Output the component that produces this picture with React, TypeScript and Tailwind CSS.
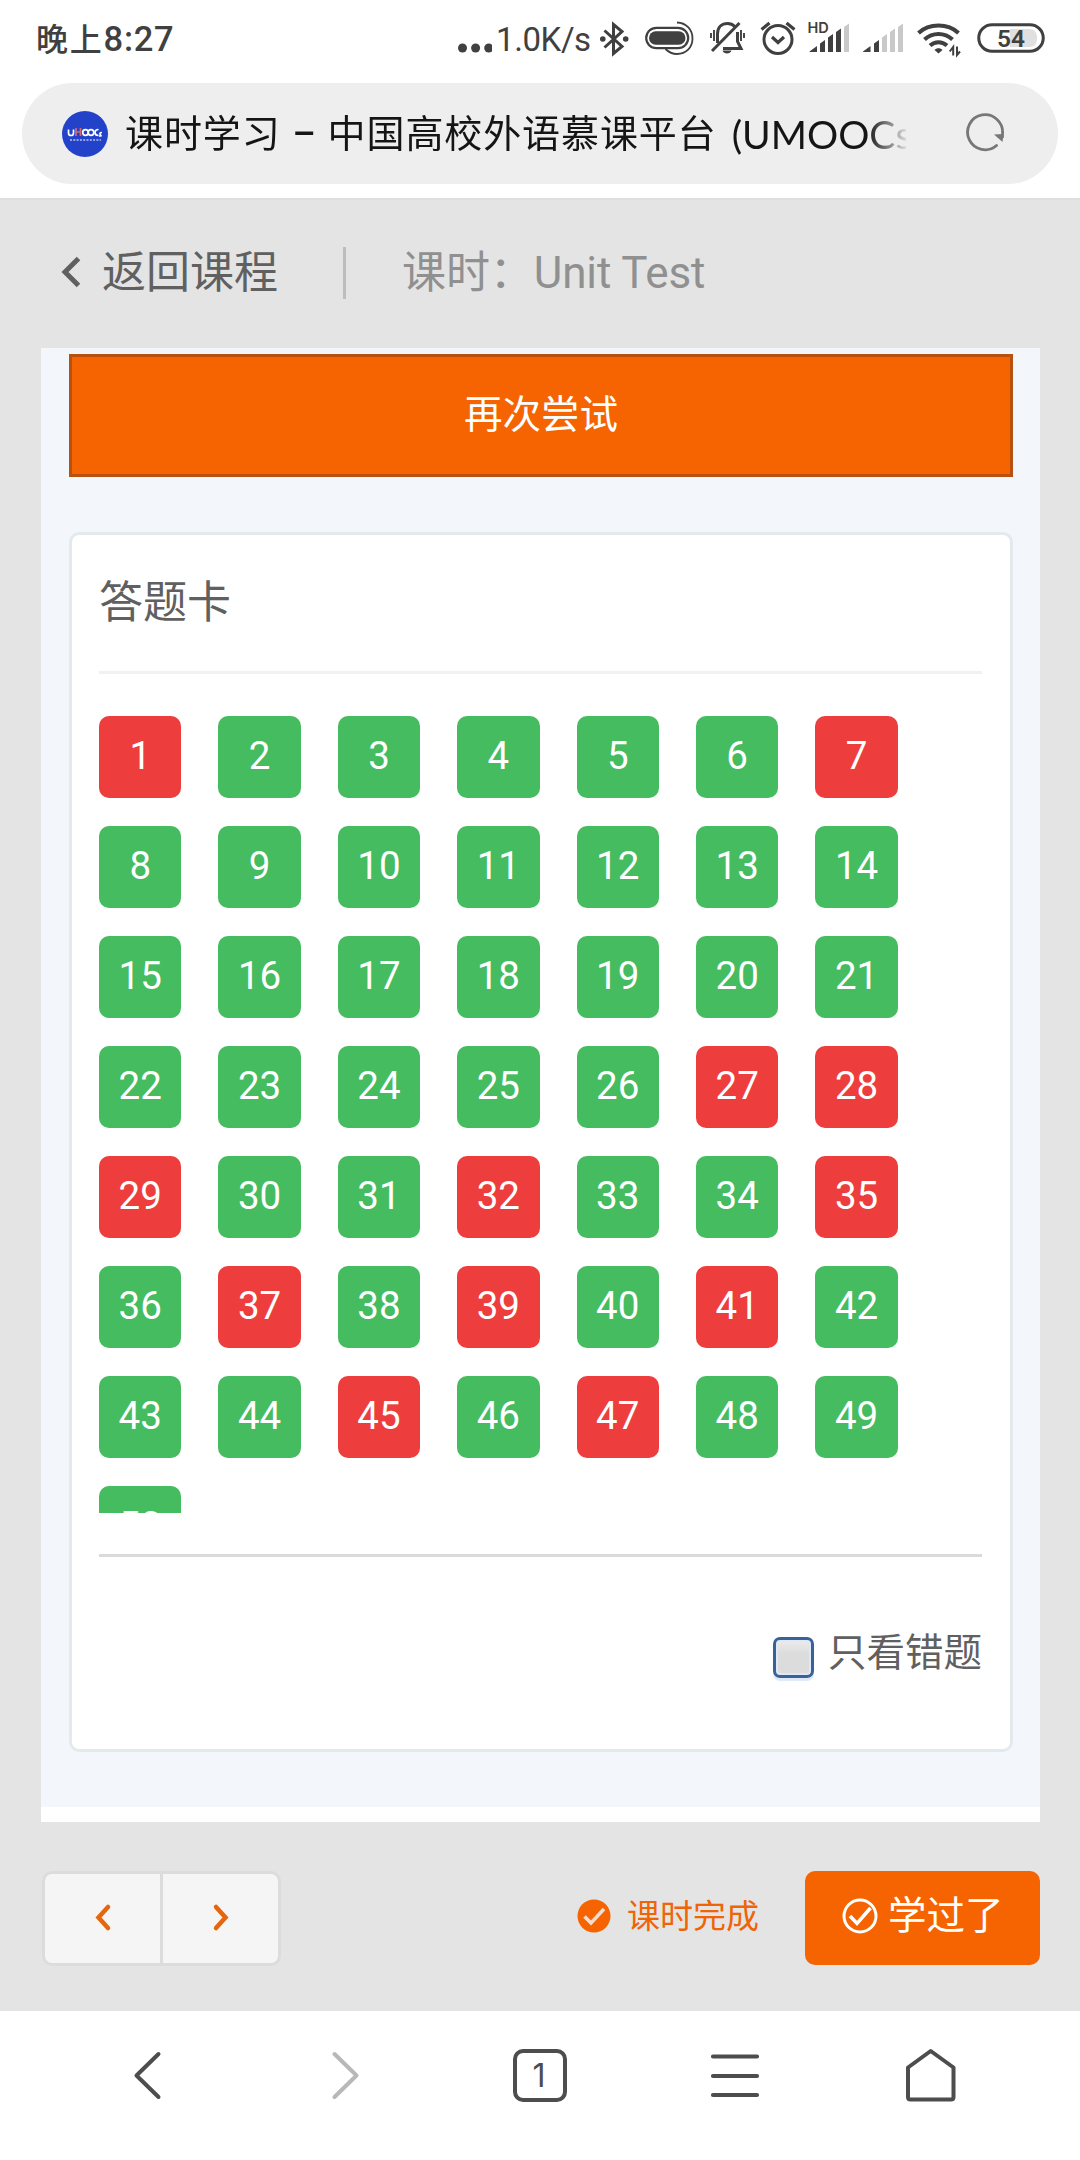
import React from 'react';

const WRONG = [1, 7, 27, 28, 29, 32, 35, 37, 39, 41, 45, 47];
const QUESTIONS = Array.from({ length: 50 }, (_, i) => i + 1);

const StatusBar: React.FC = () => (
  <div className="flex h-[83px] items-start pt-5 text-[#404040]">
    <div className="flex h-10 w-[425px] items-center pb-px pl-9 font-medium leading-none">
      <span className="text-[32px] tracking-[1.8px]">晚上</span>
      <span className="text-[34.5px] tracking-[0.7px]">8:27</span>
    </div>
    <div className="flex h-10 items-center pb-px pl-[33px]">
      <svg width="34" height="40" viewBox="0 0 34 40" fill="currentColor">
        <circle cx="4.5" cy="28" r="4.5" />
        <circle cx="17.6" cy="28" r="4.5" />
        <circle cx="30.7" cy="28" r="4.5" />
      </svg>
      <span className="w-[107px] pl-1 text-[33px] leading-none tracking-[-0.4px]">1.0K/s</span>
    </div>

    {/* Bluetooth */}
    <svg className="ml-px shrink-0" width="30" height="40" viewBox="0 0 30 40" fill="none" stroke="currentColor" strokeWidth="3">
      <path d="M4.5 10.5 22 26.5 13.5 33.500V4.500L22 11.500 4.5 27.500" />
      <circle cx="2.8" cy="19" r="2.8" fill="currentColor" stroke="none" />
      <circle cx="25.7" cy="19" r="2.8" fill="currentColor" stroke="none" />
    </svg>
    {/* Battery saver capsule */}
    <svg className="ml-[15px] shrink-0" width="50" height="40" viewBox="0 0 50 40" fill="none" stroke="currentColor">
      <rect x="1.2" y="7.8" width="42" height="20.4" rx="10.2" strokeWidth="2.2" />
      <rect x="4" y="11.3" width="36.5" height="13.4" rx="6.7" fill="currentColor" stroke="none" />
      <path d="M32 2.5C41 2.8 47.5 9.5 47.5 18.5S41 34 32 34C27 34 23.5 32 20.5 29" strokeWidth="1.8" />
    </svg>
    {/* Muted bell */}
    <svg className="ml-[15px] shrink-0" width="36" height="40" viewBox="0 0 36 40" fill="none" stroke="currentColor" strokeWidth="3">
      <path d="M7.5 23V14C7.5 7 12 3.5 17.5 3.5c3 0 5.5 1.1 7.3 3M27.5 12v9.5l3.5 7H13" />
      <path d="M29.5 3 2 31" />
      <path d="M12.5 30.500h9c-1 4-8 4-9 0Z" fill="currentColor" stroke="none" />
      <path d="M4 10v11M31 10v11M1 13v5M34 13v5" strokeWidth="1.9" />
    </svg>
    {/* Alarm */}
    <svg className="ml-[14px] shrink-0" width="36" height="40" viewBox="0 0 36 40" fill="none" stroke="currentColor" strokeWidth="3">
      <circle cx="18" cy="19.5" r="14" />
      <path d="M12 17l6 5.500 6-5.500" strokeWidth="3.2" />
      <path d="M1.5 9.5 9.5 3M34.5 9.5 26.5 3" strokeWidth="3.2" />
    </svg>
    {/* SIM 1 */}
    <svg className="-ml-1 shrink-0" width="60" height="40" viewBox="-16 0 60 40" fill="currentColor">
      <text x="-0.5" y="13" fontSize="14.5" fontWeight="600" fontFamily="Inter, sans-serif">HD</text>
      <path d="M1.500 31.500 9 26v6H1.500ZM12 23.500l5-3.500v12h-5ZM20 17.500l5-3.500v18h-5ZM28 12l5-3.500V32h-5Z" />
      <path d="M36 7l5-3.500V32h-5Z" fill="#c9c9c9" />
    </svg>
    {/* SIM 2 */}
    <svg className="ml-[10px] shrink-0" width="42" height="40" viewBox="0 0 42 40" fill="currentColor">
      <path d="M1 31.500 8.500 26v6H1ZM12 23.500l5-3.500v12h-5Z" />
      <path d="M20 17.500l5-3.500v18h-5ZM28 12l5-3.500V32h-5ZM36 7l5-3.500V32h-5Z" fill="#c9c9c9" />
    </svg>
    {/* Wifi */}
    <svg className="ml-[13px] shrink-0" width="44" height="40" viewBox="0 0 44 40" fill="none" stroke="currentColor" strokeWidth="4">
      <path d="M1.500 13c10.500-10 29.500-10 40 0M7.500 19.500c8-7.500 20-7.500 28 0M13 25.500c5-4.500 12-4.500 17 0" />
      <path d="M17.500 30c2-2.500 6-2.500 8 0L21.500 33.500Z" fill="currentColor" stroke="none" />
      <path d="M36.200 35.500V27l-3.500 4.500M40 26.500v8.500l3-3.500" strokeWidth="2" />
    </svg>
    {/* Battery */}
    <svg className="ml-4 shrink-0" width="68" height="40" viewBox="0 0 68 40">
      <rect x="1.75" y="4.7" width="64.5" height="26.6" rx="13.3" fill="none" stroke="currentColor" strokeWidth="3" />
      <path d="M33 9h19c6 0 8 4 8 9s-2 9-8 9H33Z" fill="#e0e0e0" />
      <text x="34" y="27" textAnchor="middle" fontSize="24.5" fontWeight="600" fontFamily="Roboto, sans-serif" fill="currentColor">54</text>
    </svg>
  </div>
);

const AddressBar: React.FC = () => (
  <div className="mx-[22px] flex h-[101px] items-center rounded-full bg-[#eeeeee] pl-10 text-[#151515]">
    <svg className="shrink-0" width="46" height="46" viewBox="0 0 46 46">
      <circle cx="23" cy="23" r="23" fill="#2242c9" />
      <g fill="none" stroke="#fff" strokeWidth="1.7">
        <path d="M6.500 18.500v3.500q0 2.500 2.500 2.500t2.500-2.500v-3.500" />
        <path d="M14 25v-8M18.500 17v8M14 21h4.500" stroke="#d06a72" />
        <circle cx="23.5" cy="21.5" r="2.8" />
        <circle cx="29" cy="21.5" r="2.8" />
        <path d="M36.500 18.500q-3.500 0-3.500 3t3.500 3M40 21.500q-2.500 0-2 1.500t1.500 2h-2.500" />
      </g>
      <path d="M8 29h31" stroke="#b9c6f5" strokeWidth="1.5" strokeDasharray="2 1.3" />
    </svg>
    <div className="ml-[17px] flex w-[781px] items-center overflow-hidden whitespace-nowrap pt-px text-[38px] leading-[56px] [mask-image:linear-gradient(to_right,#000_742px,transparent_785px)]">
      <span className="shrink-0 tracking-[0.9px]">课时学习</span>
      <span className="w-[47px] shrink-0 text-center text-[36px] font-medium">–</span>
      <span className="shrink-0 tracking-[0.9px]">中国高校外语慕课平台</span>
      <span className="shrink-0 pl-[15px] font-[Lato] text-[39px]">(UMOOCs)</span>
    </div>
    <svg className="ml-[58px] shrink-0" width="42" height="42" viewBox="0 0 42 42" fill="none" stroke="#777" strokeWidth="2.8" strokeLinecap="round">
      <path d="M32.500 32.500A17.500 17.500 0 1 1 38.500 21v3" />
      <path d="M30 21.500l9.500-.5-1 8Z" fill="#777" stroke="none" />
    </svg>
  </div>
);

const AnswerCard: React.FC = () => (
  <div className="mt-[55px] h-[1220px] rounded-[10px] border-[3px] border-[#e3eaee] bg-white pl-[27px] pr-7">
    <div className="flex h-[139px] items-center border-b-[3px] border-[#f0f1f2] pb-[1px] text-[44px] leading-none text-[#606060]">答题卡</div>
    <div className="mt-[42px] grid h-[797px] grid-cols-[repeat(7,82.4px)] content-start gap-x-[37px] gap-y-7 overflow-hidden">
      {QUESTIONS.map((n) => (
        <div
          key={n}
          className={`flex h-[82px] items-center justify-center rounded-[10px] pb-px text-[38.5px] leading-none text-white ${
            WRONG.includes(n) ? 'bg-[#ed3d3d]' : 'bg-[#44bc5f]'
          }`}
        >
          {n}
        </div>
      ))}
    </div>
    <div className="mt-[41px] h-[3px] bg-[#dadada]" />
    <label className="flex items-center justify-end pt-[71px] text-[38.5px] leading-[48px] text-[#606060]">
      <span className="mr-[14px] mt-[9px] h-[41px] w-[41px] rounded-[7px] border-[3px] border-[#3a6298] bg-gradient-to-b from-[#ececec] to-[#dcdcdc] to-40% shadow-[inset_0_0_0_2px_#dbe9f8,0_3px_1px_#dde9f8]" />
      只看错题
    </label>
  </div>
);

const Footer: React.FC = () => (
  <div className="flex h-[189px] items-start justify-between bg-[#e4e4e4] pl-[42px] pr-10 pt-[49px]">
    <div className="flex h-[95px] w-[239px] rounded-[10px] border-[3px] border-[#dcdcdc] bg-[#f5f5f5]">
      <button className="flex w-[118px] items-center justify-center border-r-[3px] border-[#dcdcdc] pb-0.5">
        <svg width="20" height="30" viewBox="0 0 20 30" fill="none" stroke="#e6660f" strokeWidth="4.5" strokeLinecap="round">
          <path d="M15 4 5.500 14.500 15 25" />
        </svg>
      </button>
      <button className="flex flex-1 items-center justify-center pb-0.5">
        <svg width="20" height="30" viewBox="0 0 20 30" fill="none" stroke="#e6660f" strokeWidth="4.5" strokeLinecap="round">
          <path d="M5 4l9.500 10.500L5 25" />
        </svg>
      </button>
    </div>
    <div className="flex items-start">
      <div className="mr-[46px] flex h-[90px] items-center text-[33px] leading-none text-[#ef6407]">
        <svg className="mr-4" width="34" height="34" viewBox="0 0 34 34">
          <circle cx="17" cy="17" r="16.5" fill="#f56400" />
          <path d="M7.500 17.500l6.500 6.500L27 10" fill="none" stroke="#f3ddd0" strokeWidth="3.5" />
        </svg>
        课时完成
      </div>
      <button className="flex h-[94px] w-[235px] items-center rounded-[10px] bg-[#f56400] pb-[3px] pl-[37px] text-[38.5px] leading-none text-white">
        <svg className="mb-0.5 mr-[10px]" width="36" height="36" viewBox="0 0 36 36" fill="none" stroke="#fff">
          <circle cx="18" cy="18" r="16" strokeWidth="3" />
          <path d="M8 18l7 7.500L28.500 10" strokeWidth="3.5" />
        </svg>
        学过了
      </button>
    </div>
  </div>
);

const BrowserNav: React.FC = () => (
  <div className="flex h-[149px] items-start bg-white px-[50px] pt-[34px] text-[#4d4d4d]">
    <div className="flex flex-1 justify-center">
      <svg width="60" height="60" viewBox="0 0 60 60" fill="none" stroke="currentColor" strokeWidth="4" strokeLinecap="round" strokeLinejoin="round">
        <path d="M40.500 9 18.500 30.500 40.500 52" />
      </svg>
    </div>
    <div className="flex flex-1 justify-center">
      <svg width="60" height="60" viewBox="0 0 60 60" fill="none" stroke="#b8b8b8" strokeWidth="4" strokeLinecap="round" strokeLinejoin="round">
        <path d="M20.500 9 42.500 30.500 20.500 52" />
      </svg>
    </div>
    <div className="flex flex-1 justify-center">
      <div className="mt-1 flex h-[53px] w-[54px] items-center justify-center rounded-[10px] border-4 border-[#4d4d4d] pr-0.5 font-[Inter] text-[32px] leading-none">1</div>
    </div>
    <div className="flex flex-1 justify-center">
      <svg width="60" height="60" viewBox="0 0 60 60" stroke="currentColor" strokeWidth="4.2" strokeLinecap="round">
        <path d="M7 11.500h44M7 31h44M7 50h44" />
      </svg>
    </div>
    <div className="flex flex-1 justify-center">
      <svg width="60" height="60" viewBox="0 0 60 60" fill="none" stroke="currentColor" strokeWidth="4" strokeLinejoin="round">
        <path d="M28.700 6 51.500 22.500V52q0 2.500-2.500 2.500H8.500Q6 54.500 6 52V22.500Z" />
      </svg>
    </div>
  </div>
);

const App: React.FC = () => (
  <div className="flex h-[2160px] w-[1080px] flex-col overflow-hidden bg-white font-[Roboto,'Noto_Sans_CJK_SC',sans-serif]">
    <StatusBar />
    <AddressBar />

    <main className="mt-[14px] border-t-2 border-[#dedede] bg-[#e4e4e4]">
      <div className="flex h-[148px] items-center pb-[3px] pl-[60px] text-[44px] leading-none text-[#606060]">
        <svg width="24" height="34" viewBox="0 0 24 34" fill="none" stroke="currentColor" strokeWidth="5">
          <path d="M18.500 2.500 5 16l13.500 13.500" />
        </svg>
        <span className="ml-[18px]">返回课程</span>
        <span className="ml-[65px] h-[52px] w-[3px] bg-[#bdbdbd]" />
        <span className="ml-14 tracking-[-0.1px] text-[#909090]">课时：Unit Test</span>
      </div>

      <div className="mx-10 ml-[41px] border-b-[15px] border-white bg-[#f3f7fc] pb-[55px] pl-[28px] pr-[27px] pt-1.5">
        <button className="flex h-[123px] w-full items-center justify-center border-[3px] border-[#b8510f] bg-[#f56400] pb-px text-[38.5px] leading-none text-white">
          再次尝试
        </button>
        <AnswerCard />
      </div>
    </main>

    <Footer />
    <BrowserNav />
  </div>
);

export default App;
